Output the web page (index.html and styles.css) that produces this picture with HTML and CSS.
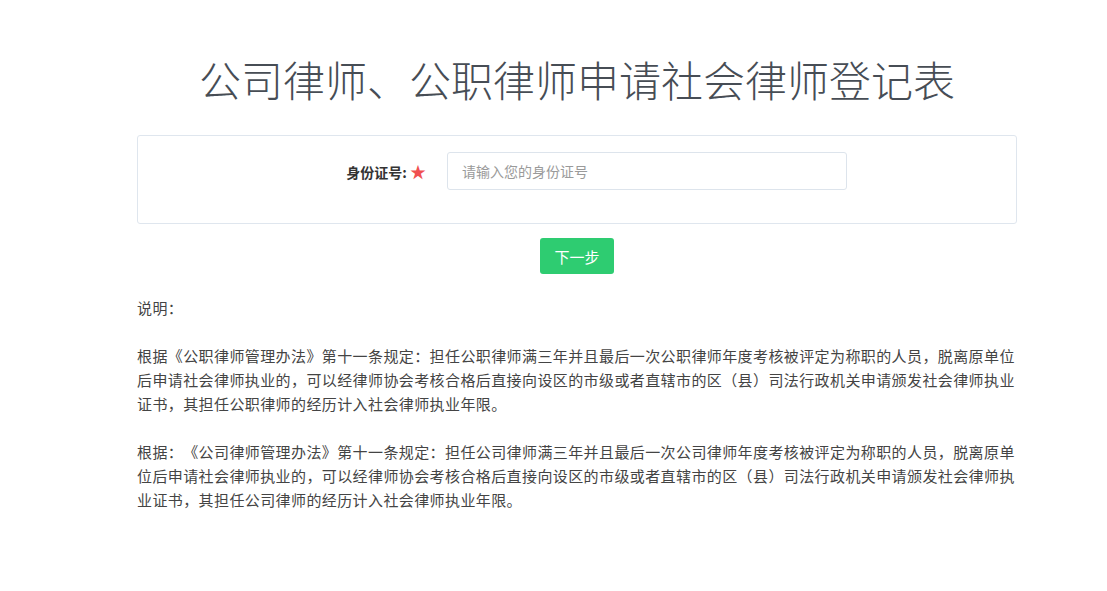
FILE: index.html
```html
<!DOCTYPE html>
<html lang="zh-CN">
<head>
  <meta charset="UTF-8" />
  <meta name="viewport" content="width=device-width, initial-scale=1.0" />
  <title>公司律师、公职律师申请社会律师登记表</title>
  <link rel="stylesheet" href="styles.css">
</head>
<body>
  <div class="container">
    <h1 class="page-title">公司律师、公职律师申请社会律师登记表</h1>

    <form class="form-card" onsubmit="return false;">
      <div class="form-row">
        <label class="form-label" for="idCard">身份证号: <span class="required">★</span></label>
        <div class="form-field">
          <input type="text" id="idCard" class="form-input" placeholder="请输入您的身份证号" />
        </div>
      </div>
    </form>

    <div class="actions">
      <button type="button" class="btn-next">下一步</button>
    </div>

    <div class="notes">
      <p>说明：</p>
      <p>根据《公职律师管理办法》第十一条规定：担任公职律师满三年并且最后一次公职律师年度考核被评定为称职的人员，脱离原单位后申请社会律师执业的，可以经律师协会考核合格后直接向设区的市级或者直辖市的区（县）司法行政机关申请颁发社会律师执业证书，其担任公职律师的经历计入社会律师执业年限。</p>
      <p>根据：《公司律师管理办法》第十一条规定：担任公司律师满三年并且最后一次公司律师年度考核被评定为称职的人员，脱离原单位后申请社会律师执业的，可以经律师协会考核合格后直接向设区的市级或者直辖市的区（县）司法行政机关申请颁发社会律师执业证书，其担任公司律师的经历计入社会律师执业年限。</p>
    </div>
  </div>
</body>
</html>
```

FILE: styles.css
```css
body {
  margin: 0;
  padding: 0;
  font-family: "Noto Sans CJK SC", "Noto Sans", sans-serif;
  background-color: #fff;
  color: #333;
  text-spacing-trim: space-all;
}

/* page is laid out for a 1154px wide frame */
.container {
  width: 880px;
  margin: 0 0 0 137px;
  padding-top: 54px;
}

.page-title {
  margin: 0 0 31px;
  font-size: 42px;
  font-weight: 300;
  line-height: 50px;
  text-align: center;
  color: #474d55;
}

.form-card {
  border: 1px solid #dfe6ee;
  border-radius: 3px;
  padding: 16px 0 33px;
}

.form-row {
  display: flex;
  align-items: center;
}

.form-label {
  width: 293px;
  box-sizing: border-box;
  padding-right: 5px;
  text-align: right;
  font-size: 14px;
  font-weight: 700;
  color: #333;
}

.required {
  color: #f05050;
  font-weight: 400;
  font-size: 16px;
}

.form-field {
  padding-left: 16px;
}

.form-input {
  width: 400px;
  height: 38px;
  box-sizing: border-box;
  padding: 0 14px;
  border: 1px solid #dde4ec;
  border-radius: 3px;
  font-family: inherit;
  font-size: 14px;
  color: #333;
  outline: none;
}

.form-input::placeholder {
  color: #9a9a9a;
}

.actions {
  display: flex;
  justify-content: center;
  margin-top: 14px;
}

.btn-next {
  width: 74px;
  height: 36px;
  border: none;
  border-radius: 3px;
  background: #2ecc71;
  color: #fff;
  font-family: inherit;
  font-size: 15px;
  cursor: pointer;
}

.notes {
  margin-top: 22px;
  font-size: 15px;
  letter-spacing: 0.4px;
  line-height: 24px;
  color: #444;
}

.notes p {
  margin: 0 0 24px;
}
```
